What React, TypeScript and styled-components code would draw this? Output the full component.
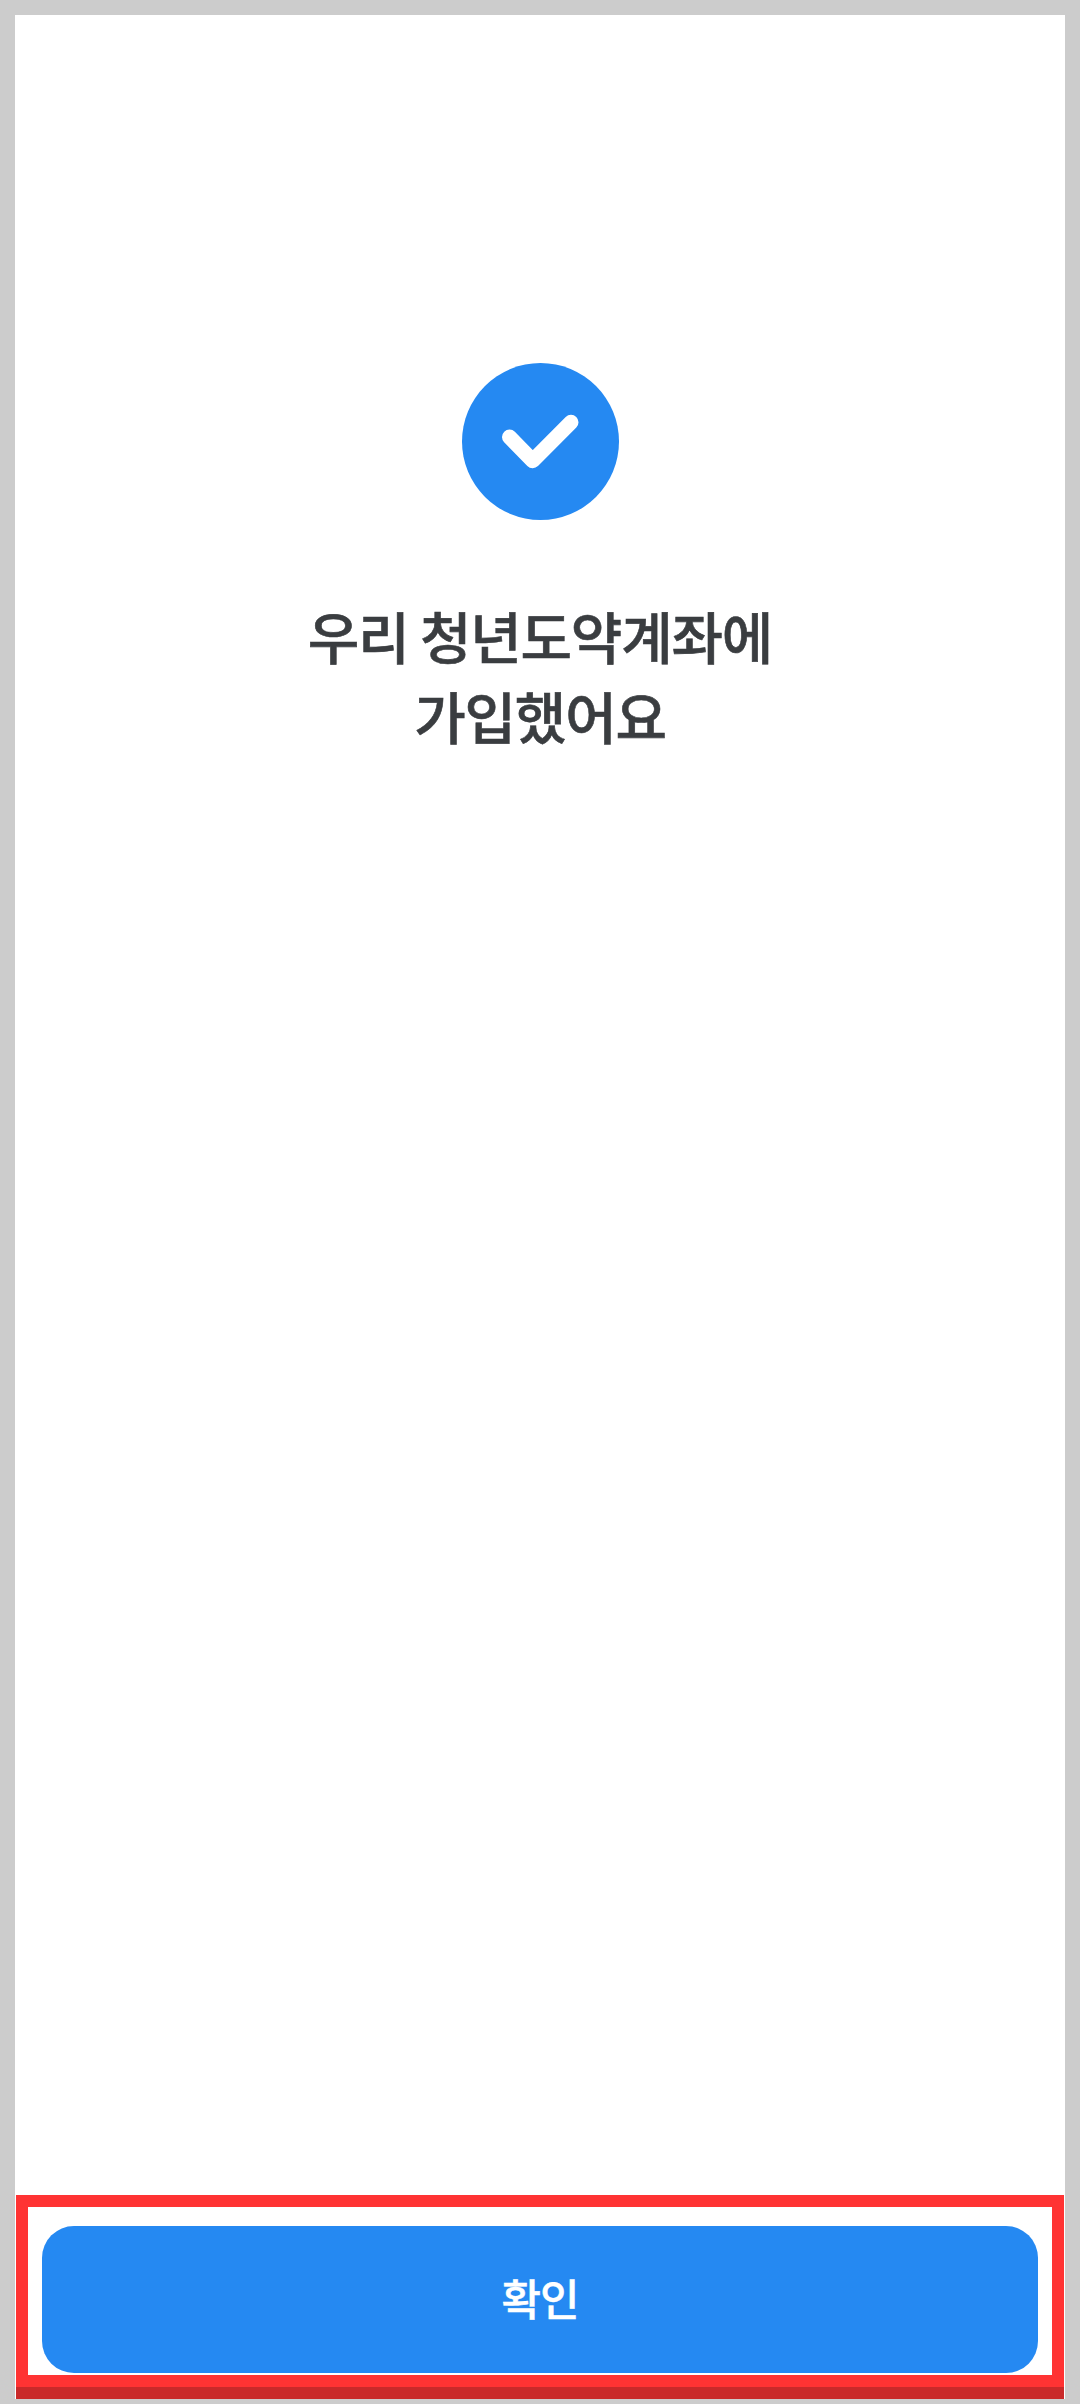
import React from "react";
import styled, { createGlobalStyle } from "styled-components";

const Global = createGlobalStyle`
  html, body { margin: 0; padding: 0; background: #cccccc; }
  * { box-sizing: border-box; }
`;

const Page = styled.div`
  width: 1080px;
  height: 2404px;
  padding: 15px 15px 5px;
  background: #cccccc;
  font-family: "Noto Sans CJK KR", "Noto Sans", sans-serif;
`;

const Panel = styled.div`
  height: 100%;
  display: flex;
  flex-direction: column;
  background: #ffffff;
`;

const Main = styled.main`
  flex: 1;
  display: flex;
  flex-direction: column;
  align-items: center;
  padding-top: 348px;
`;

const SuccessIcon = styled.svg`
  display: block;
  width: 157px;
  height: 157px;
`;

const Title = styled.h1`
  margin: 75px 0 0;
  font-size: 56px;
  font-weight: 500;
  letter-spacing: -1.2px;
  line-height: 80px;
  text-align: center;
  color: #3a3d40;
  -webkit-text-stroke: 0.6px #3a3d40;
`;

const Footer = styled.footer`
  margin: 0 1px;
  height: 192px;
  border: 12px solid #ff3333;
  padding: 19px 14px 2px;
  background: #ffffff;
`;

const Confirm = styled.button`
  display: block;
  width: 100%;
  height: 147px;
  border: 0;
  border-radius: 32px;
  padding: 0 0 6px;
  background: #2589f2;
  color: #ffffff;
  font-family: inherit;
  font-size: 43px;
  font-weight: 500;
  letter-spacing: -1px;
  -webkit-text-stroke: 0.4px #ffffff;
`;

const Strip = styled.div`
  margin: 0 1px;
  height: 12px;
  background: #c92a2a;
`;

export default function App() {
  return (
    <Page>
      <Global />
      <Panel>
        <Main>
          <SuccessIcon viewBox="0 0 157 157" aria-hidden="true">
            <circle cx="78.5" cy="78.5" r="78.5" fill="#2589f2" />
            <path
              d="M47.5 74 L70.7 97.7 L109 59.3"
              fill="none"
              stroke="#ffffff"
              strokeWidth="15"
              strokeLinecap="round"
              strokeLinejoin="round"
            />
          </SuccessIcon>
          <Title>
            우리 청년도약계좌에
            <br />
            가입했어요
          </Title>
        </Main>
        <Footer>
          <Confirm>확인</Confirm>
        </Footer>
        <Strip />
      </Panel>
    </Page>
  );
}
